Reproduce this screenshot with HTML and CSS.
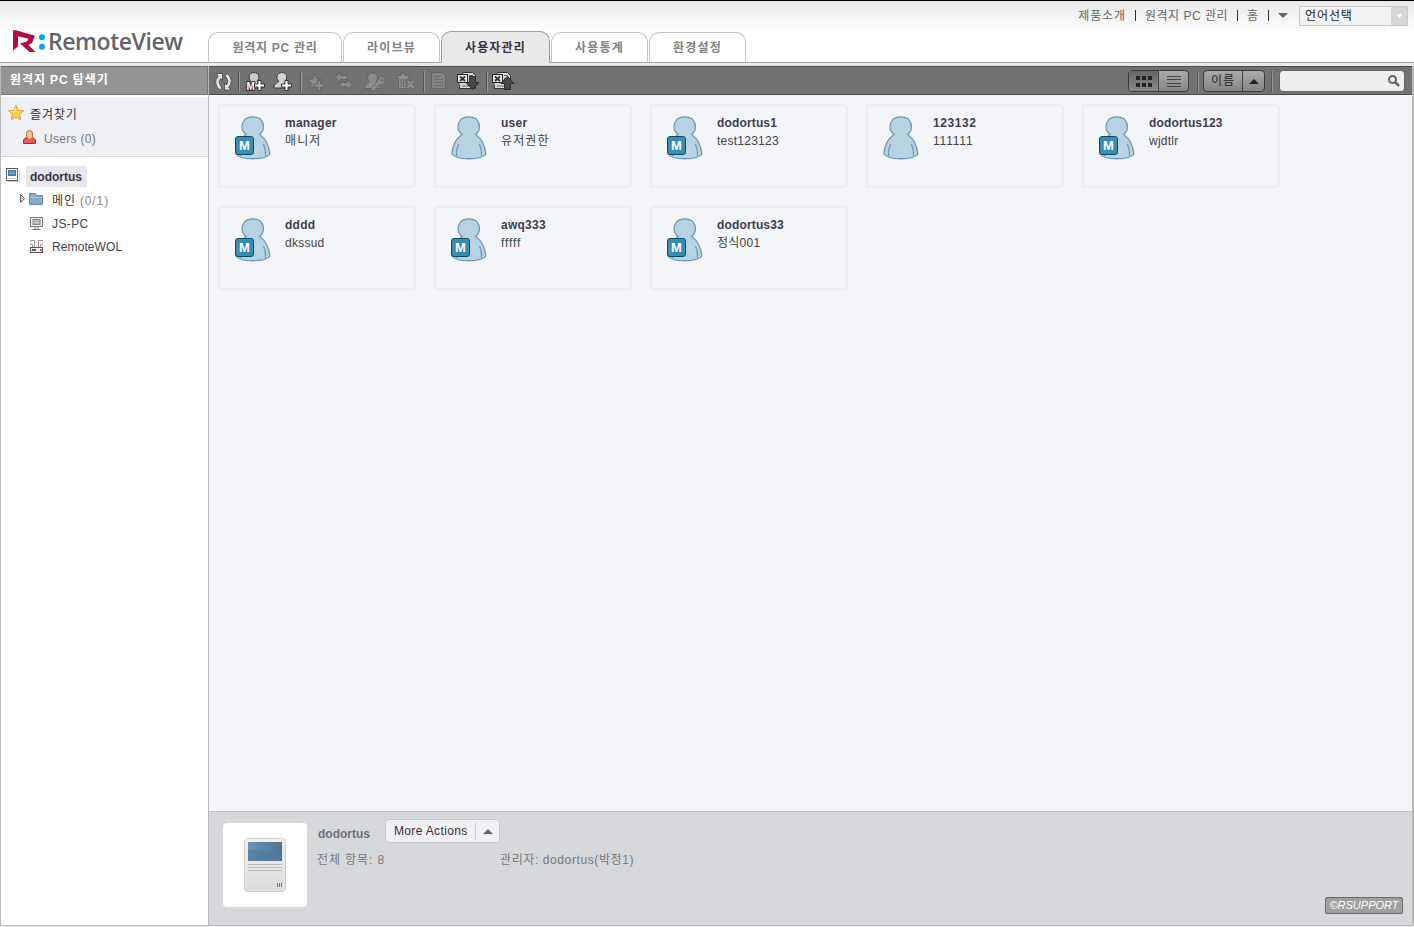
FILE: index.html
```html
<!DOCTYPE html>
<html lang="ko">
<head>
<meta charset="utf-8">
<title>RemoteView</title>
<link rel="stylesheet" href="styles.css">
</head>
<body>
<svg class="defs" width="0" height="0">
  <defs>
    <symbol id="person" viewBox="0 0 36 44">
      <path d="M11 18.500C4.500 13.500 6 .8 17.800 .8S31 13.500 24.600 18.500C29.500 22 34 29 34.900 38C31 44.300 5 44.300 .9 38C1.500 29 6 22 11 18.500Z" fill="#b7d3e1" stroke="#7196b7" stroke-width="1.300"/>
      <path d="M7.500 28Q5.200 33 5.500 40M28.500 28Q30.800 33 30.500 40" fill="none" stroke="#7196b7" stroke-width="1.300"/>
    </symbol>
    <g id="figure"><path d="M-3 2.500C-6.500-1-5-6.500 0-6.500S6.500-1 3 2.500C6.500 4 7.500 6 8 9H-8C-7.500 6-6.500 4-3 2.500Z"/></g>
    <g id="plus"><path d="M-1.500-5H1.500V-1.500H5V1.500H1.500V5H-1.500V1.500H-5V-1.500H-1.500Z"/></g>
    <g id="sheet">
      <path d="M463 73.500V72.500H472.500L475.500 75.500V88.500H459.500V85" fill="#d8d8d8" stroke="#333"/>
      <rect x="457.500" y="74.500" width="10" height="8" fill="#e6e6e6" stroke="#222"/>
      <path d="M460 76.500L465 81M465 76.500L460 81" stroke="#333" stroke-width="1.800"/>
      <path d="M469 75.500H473M469 78.500H474M462 86H470" stroke="#666"/>
    </g>
  </defs>
</svg>
<div class="app">
  <header class="header">
    <svg class="logo" width="208" height="61" viewBox="0 1 208 61">
      <path d="M13 30.500L15 30L35 35.800L32 43L28.500 45L35.500 52H29.500L20 43.500L27 41.500L28.500 38.800L18 36.300V46.500L13 50.500Z" fill="#b20d3b"/>
      <circle cx="42" cy="37.300" r="3" fill="#0aa2e6"/><circle cx="42" cy="46.800" r="3" fill="#0aa2e6"/>
      <text class="logo-text" x="48" y="50" textLength="135">RemoteView</text>
    </svg>
    <nav class="tabs">
      <a class="tab tab-wide">원격지 PC 관리</a>
      <a class="tab">라이브뷰</a>
      <a class="tab tab-active">사용자관리</a>
      <a class="tab">사용통계</a>
      <a class="tab">환경설정</a>
    </nav>
    <div class="links">
      <a>제품소개</a><i class="bar"></i><a class="mixed">원격지 PC 관리</a><i class="bar"></i><a>홈</a><i class="bar"></i>
      <svg class="caret" width="10" height="5"><path d="M0 0H10L5 5Z" fill="#666"/></svg>
      <div class="language"><span>언어선택</span><b><svg width="5" height="4"><path d="M0 0H5V1L2.500 4L0 1Z" fill="#fff"/></svg></b></div>
    </div>
  </header>

  <main class="main">
    <aside class="sidebar">
      <h2 class="side-title">원격지 PC 탐색기</h2>
      <div class="favorites">
        <div class="fav-row">
          <svg width="29" height="24" viewBox="1 102 29 24"><path d="M16 105.500L18.200 110.500L23.500 110.800L19.500 114.300L20.700 119.500L16 116.800L11.300 119.500L12.500 114.300L8.500 110.800L13.800 110.500Z" fill="#ffd253" stroke="#d9981f"/><path d="M15.500 107.500L14.500 111.500L10.500 112" stroke="#fff1b0" fill="none"/></svg>
          <span class="kor dark">즐겨찾기</span>
        </div>
        <div class="fav-row">
          <svg width="43" height="24" viewBox="1 127 43 24"><path d="M23.500 143.500V140Q24 138 28 137.500H31Q35 138 35.500 140V143.500Z" fill="#ef5661" stroke="#b52a34"/><path d="M26.500 137V134Q26.500 130.500 29.500 130.500T32.500 134V137L29.500 140Z" fill="#f4c78c" stroke="#b6722e"/></svg>
          <span class="users">Users (0)</span>
        </div>
      </div>
      <div class="tree">
        <div class="tree-row root">
          <svg width="25" height="24" viewBox="1 164 25 24"><path d="M8 181.500H19.500V170" stroke="#ccc" fill="none"/><rect x="6.500" y="168.500" width="11" height="12" fill="#fff" stroke="#555e68"/><rect x="8.500" y="170.500" width="7" height="5" fill="#6699bf" stroke="#3e78a8"/><path d="M8 178.500H16" stroke="#ccc"/></svg>
          <span class="root-name">dodortus</span>
        </div>
        <div class="tree-row">
          <svg width="51" height="24" viewBox="1 188 51 24"><path d="M20.500 194.500L24.500 198.500L20.500 202.500Z" fill="#ddd" stroke="#666"/><path d="M29.500 204.500V193.500H35.500L36.500 195.500H42.500V204.500Z" fill="#8aabc8" stroke="#6488a8"/><path d="M30 197.500H42" stroke="#a8c2d6"/></svg>
          <span class="kor dark drop">메인</span><span class="count drop">(0/1)</span>
        </div>
        <div class="tree-row">
          <svg width="51" height="23" viewBox="1 212 51 23"><rect x="30.500" y="217.500" width="12" height="9" fill="#eee" stroke="#777"/><rect x="33" y="219.500" width="7" height="5" fill="#bbb" stroke="#888"/><path d="M35 227V229M38 227V229M32.500 229.500H40.500" stroke="#777" fill="none"/></svg>
          <span class="js drop">JS-PC</span>
        </div>
        <div class="tree-row">
          <svg width="51" height="23" viewBox="1 235 51 23"><path d="M30 240.500H34.500V247M43 240.500H38.500V247M30 244.500H32.500V247M43 244.500H40.500V247" stroke="#999" fill="none"/><rect x="30.500" y="247.500" width="12" height="5" fill="#eee" stroke="#555"/><path d="M32 250H36" stroke="#555" stroke-width="2"/><path d="M40 250H41.500" stroke="#e33" stroke-width="2"/></svg>
          <span class="wol drop">RemoteWOL</span>
        </div>
      </div>
    </aside>

    <section class="content">
      <div class="toolbar">
        <svg width="28" height="27" viewBox="209 67 28 27"><g fill="#e2e2e2" stroke="#444" stroke-width=".8"><path d="M216 73.500H222.500V80.500L220.600 78.500Q217.500 82.500 222 88L219.500 90Q212.500 83 218.300 76Z"/><path d="M231 90H224.500V83L226.400 85Q229.500 81 225 75.500L227.500 73.500Q234.500 80.500 228.700 87.500Z"/></g></svg>
        <i class="sep"></i>
        <svg width="28" height="27" viewBox="240 67 28 27"><use href="#figure" x="254" y="79" fill="#c9c9c9" stroke="#3b3b3b"/><text class="m-small" x="246.500" y="89.500">M</text><use href="#plus" x="259.500" y="85.500" fill="#fff" stroke="#333"/></svg>
        <svg width="31" height="27" viewBox="268 67 31 27"><use href="#figure" x="281.800" y="79" fill="#d2d2d2" stroke="#3b3b3b"/><use href="#plus" x="286.500" y="85.500" fill="#fff" stroke="#333"/></svg>
        <i class="sep"></i>
        <svg width="28" height="27" viewBox="302 67 28 27" fill="#8c8c8c" stroke="#666"><path d="M315 73.500L317 79L323 79.500L318.500 83L320 89L315 85.500L310 89L311.500 83L307 79.500L313 79Z"/><use href="#plus" x="319" y="85.500"/></svg>
        <svg width="28" height="27" viewBox="330 67 28 27" fill="#8c8c8c" stroke="#666"><path d="M335 77.500L340.500 72.500V75.500H347V79.500H340.500V82.500Z"/><path d="M352.500 84.500L347 79.500V82.500H340V86.500H347V89.500Z"/></svg>
        <svg width="32" height="27" viewBox="358 67 32 27" fill="#8c8c8c" stroke="#666"><use href="#figure" x="372.500" y="79.500"/><path d="M379 78L382 76L386 80L383 85L379 85L374 91H371V88L377 82Z"/><circle cx="382" cy="80" r="1"/></svg>
        <svg width="32" height="27" viewBox="390 67 32 27" fill="#8c8c8c" stroke="#666"><path d="M397 75.500H401V73.500H405V75.500H409V78H408V88.500H398.500V78H397Z"/><path d="M401 79V87M403.500 79V87M406 79V87"/><path d="M406 81L408 79.500L410.500 82L413 79.500L415 81.500L412.500 84.500L415 87L413 89.500L410.500 87L408 89.500L406 87.500L408.500 84.500Z"/></svg>
        <i class="sep"></i>
        <svg width="27" height="27" viewBox="425 67 27 27" fill="#858585" stroke="#666"><path d="M431.500 72.500H442L445.500 76V88.500H431.500Z"/><path d="M434 76.500H441M434 79.500H443M434 82.500H443M434 85.500H443" stroke="#6c6c6c"/></svg>
        <svg width="33" height="27" viewBox="452 67 33 27"><use href="#sheet"/><path d="M469.500 76.500H475.500V82.500H478.800L472.500 89.800L466 82.500H469.500Z" fill="#484848" stroke="#2c2c2c"/></svg>
        <i class="sep"></i>
        <svg width="32" height="27" viewBox="488 67 32 27"><use href="#sheet" x="35"/><path d="M504.500 89.500H510.500V83.500H513.800L507.500 76.200L501 83.500H504.500Z" fill="#484848" stroke="#2c2c2c"/></svg>
        <div class="tools-right">
          <div class="seg view"><span class="pressed"><svg width="16" height="11" fill="#222"><path d="M0 0H4V4H0ZM6 0H10V4H6ZM12 0H16V4H12ZM0 7H4V11H0ZM6 7H10V11H6ZM12 7H16V11H12Z"/></svg></span><span><svg width="14" height="11" stroke="#444"><path d="M0 .5H14M0 3.500H14M0 7.500H14M0 10.500H14"/></svg></span></div>
          <i class="sep"></i>
          <div class="seg sort"><span class="sort-name">이름</span><span><svg width="10" height="5"><path d="M0 5L5 0L10 5Z" fill="#222"/></svg></span></div>
          <i class="sep"></i>
          <div class="search"><svg width="12" height="12" fill="none" stroke="#666" stroke-width="2"><circle cx="4.500" cy="4.500" r="3.500"/><path d="M7 7L11 11" stroke-width="2.500"/></svg></div>
        </div>
      </div>

      <div class="cards">
        <article class="card"><div class="avatar"><svg width="36" height="44"><use href="#person"/></svg><b class="badge">M</b></div><div><h3>manager</h3><p class="kor">매니저</p></div></article>
        <article class="card"><div class="avatar"><svg width="36" height="44"><use href="#person"/></svg></div><div><h3>user</h3><p class="kor">유저권한</p></div></article>
        <article class="card"><div class="avatar"><svg width="36" height="44"><use href="#person"/></svg><b class="badge">M</b></div><div><h3 class="tight">dodortus1</h3><p>test123123</p></div></article>
        <article class="card"><div class="avatar"><svg width="36" height="44"><use href="#person"/></svg></div><div><h3 class="digits">123132</h3><p class="ones">111111</p></div></article>
        <article class="card"><div class="avatar"><svg width="36" height="44"><use href="#person"/></svg><b class="badge">M</b></div><div><h3 class="tight">dodortus123</h3><p>wjdtlr</p></div></article>
        <article class="card"><div class="avatar"><svg width="36" height="44"><use href="#person"/></svg><b class="badge">M</b></div><div><h3>dddd</h3><p>dkssud</p></div></article>
        <article class="card"><div class="avatar"><svg width="36" height="44"><use href="#person"/></svg><b class="badge">M</b></div><div><h3>awq333</h3><p class="narrow">fffff</p></div></article>
        <article class="card"><div class="avatar"><svg width="36" height="44"><use href="#person"/></svg><b class="badge">M</b></div><div><h3 class="tight">dodortus33</h3><p>정식001</p></div></article>
      </div>

      <footer class="details">
        <div class="thumb">
          <svg width="42" height="54">
            <defs><linearGradient id="screen"><stop stop-color="#6d94b2"/><stop offset="1" stop-color="#4d7393"/></linearGradient><linearGradient id="case" x2="0" y2="1"><stop stop-color="#f0f0f0"/><stop offset="1" stop-color="#dcdddf"/></linearGradient></defs>
            <rect x=".5" y=".5" width="41" height="53" rx="3" fill="url(#case)" stroke="#d2d2d2"/>
            <rect x="4" y="4" width="34" height="19" fill="url(#screen)"/><path d="M4 12Q24 12 38 16V23H4Z" fill="#4e7899" opacity=".6"/>
            <path d="M4 26.500H38M4 29.500H38M4 32.500H38" stroke="#bbb"/><path d="M33.500 45V49M35.500 45V49M37.500 45V49" stroke="#777"/>
          </svg>
        </div>
        <div class="info">
          <div class="info-head"><strong>dodortus</strong><div class="more"><span>More Actions</span><b><svg width="10" height="5"><path d="M0 5L5 0L10 5Z" fill="#666"/></svg></b></div></div>
          <div class="info-line"><span class="total">전체 항목: 8</span><span class="admin">관리자: dodortus(박정1)</span></div>
        </div>
        <div class="support">©RSUPPORT</div>
      </footer>
    </section>
  </main>
</div>
</body>
</html>
```
FILE: styles.css
```css
* { box-sizing: border-box; }
body { margin: 0; background: #eee; font: 12px/18px "Liberation Sans", "Noto Sans CJK KR", sans-serif; color: #444; overflow: hidden; }
svg { display: block; flex: none; }
h2, h3, p { margin: 0; font-size: 12px; }
.defs { position: absolute; }
.app { width: 1414px; height: 927px; display: flex; flex-direction: column; }

.header { height: 66px; display: flex; align-items: flex-start; border-top: 1px solid #000; background: linear-gradient(#e8e8e8, #fff 31px, #fff 61px, #a6a6a3 61px, #a6a6a3 62px, #e9e9e9 62px); }
.logo-text { font: 600 23px "Open Sans", sans-serif; fill: #646567; }
.tabs { display: flex; align-items: flex-end; gap: 1px; height: 62px; }
.tab { width: 97px; height: 31px; padding-top: 6px; text-align: center; border: 1px solid #c5c5c5; border-bottom-color: #a6a6a3; border-radius: 10px 10px 0 0; background: #fff; color: #828282; font-weight: bold; letter-spacing: 1.2px; }
.tab-wide { width: 134px; letter-spacing: .7px; }
.tab-active { width: 109px; height: 32px; padding-top: 7px; background: #e9e9e9; border-color: #a0a0a0; border-bottom-color: #e9e9e9; color: #3a3040; }
.links { margin-left: auto; padding: 4px 6px 0 0; height: 25px; display: flex; align-items: center; color: #666; letter-spacing: .9px; }
.mixed { letter-spacing: .5px; }
.bar { width: 1px; height: 11px; margin: 0 9px; background: #333; }
.caret { margin-right: 11px; }
.language { width: 109px; height: 20px; display: flex; justify-content: space-between; border: 1px solid #c8c8c8; background: #f3f3f3; color: #222; padding-left: 5px; }
.language b { width: 16px; display: grid; place-items: center; background: #d6d6d6; }

.main { height: 861px; display: flex; padding-bottom: 1px; border-bottom: 1px solid #eee; background: #bbb; }
.sidebar { width: 209px; border: solid #b9b9b9; border-width: 0 1px; background: #fff; }
.side-title { height: 29px; padding-left: 9px; border: 1px solid #777; border-left: 0; border-top-color: #6d6d6d; background: #959595; color: #fff; line-height: 27px; letter-spacing: .9px; }
.favorites { height: 62px; margin-bottom: 7px; padding-top: 5px; border-top: 2px solid #fff; border-bottom: 1px solid #d2d2d6; background: #eff0f5; }
.fav-row { display: flex; height: 24px; line-height: 26px; }
.fav-row:last-child { margin-top: 1px; line-height: 24px; color: #777; }
.users { letter-spacing: .3px; }
.kor { letter-spacing: .9px; }
.dark { color: #333; }
.tree-row { height: 23px; display: flex; line-height: 23px; }
.tree-row:nth-child(-n+2) { height: 24px; line-height: 24px; }
.drop { padding-top: 1px; }
.root-name { width: 61px; height: 21px; margin-top: 2px; padding-left: 4px; background: #e8e7ee; color: #393140; font-weight: bold; line-height: 22px; }
.count { margin-left: 4px; color: #888; letter-spacing: .9px; }
.js { letter-spacing: .4px; }
.wol { letter-spacing: .1px; }

.content { width: 1204px; border-right: 1px solid #bbb; background: #f3f5f9; display: flex; flex-direction: column; }
.toolbar { height: 29px; display: flex; flex: none; border: solid #4c4a4a; border-width: 1px 0; background: #727272; }
.sep { flex: none; width: 3px; height: 21px; margin-top: 4px; background: linear-gradient(90deg, #727272 1px, #555 1px, #555 2px, #959595 2px); }
.tools-right { margin-left: auto; padding: 3px 7px 0 0; display: flex; }
.tools-right .sep { margin-top: 1px; }
.seg { height: 22px; display: flex; border: 1px solid #393939; border-radius: 4px; overflow: hidden; background: linear-gradient(#aaa, #858585); }
.seg span { flex: 1; display: grid; place-items: center; }
.seg span + span { border-left: 1px solid #444; }
.seg .pressed { background: linear-gradient(#666, #888); }
.view { width: 61px; margin-right: 7px; }
.sort { width: 62px; margin: 0 5px 0 4px; }
.sort .sort-name { flex: 0 0 38px; letter-spacing: 1px; color: #222; line-height: 20px; }
.search { width: 126px; height: 22px; margin-left: 6px; padding: 4px 4px 0 0; display: flex; justify-content: flex-end; border: 1px solid #666; border-radius: 4px; background: #efefef; }
.m-small { font: bold 10px "Liberation Sans", sans-serif; fill: #fff; stroke: #333; stroke-width: 2px; paint-order: stroke; }

.cards { height: 716px; padding: 9px; display: grid; grid-template-columns: repeat(5, 198px); grid-auto-rows: 84px; gap: 18px; align-content: start; }
.card { display: flex; gap: 14px; padding: 8px 14px 0 15px; border: 2px solid #eeeeed; border-radius: 4px; letter-spacing: .25px; }
.card h3 { color: #403c4d; }
.card h3.digits { letter-spacing: .6px; }
.card h3.tight { letter-spacing: .15px; }
.card p.kor { letter-spacing: 1.1px; }
.card p.narrow { letter-spacing: .9px; }
.card p.ones { letter-spacing: .8px; }
.avatar { position: relative; width: 36px; padding-top: 2px; }
.badge { position: absolute; left: 0; top: 22px; width: 19px; height: 19px; border: 1px solid #084d6b; border-radius: 3px; background: #398db3; color: #fff; text-align: center; font-size: 13px; line-height: 18px; letter-spacing: 0; }

.details { flex: 1; display: flex; border-top: 1px solid #bfc0c4; background: #d7d8dc; padding: 7px 9px 0 14px; color: #777; }
.thumb { width: 84px; height: 84px; margin-top: 4px; display: grid; place-items: center; border-radius: 4px; background: #fff; }
.info { margin-left: 10px; }
.info-head { display: flex; height: 32px; }
.info-head strong { width: 68px; padding: 6px 0 0 1px; color: #70707a; }
.more { width: 115px; height: 24px; display: flex; align-items: center; border: 1px solid #c8c8cc; border-radius: 4px; background: #f1f1f5; color: #333; }
.more span { width: 90px; padding-left: 8px; border-right: 1px solid #ccc; letter-spacing: .35px; }
.more b { flex: 1; display: grid; place-items: center; }
.info-line { display: flex; }
.total { width: 183px; letter-spacing: .9px; }
.admin { letter-spacing: .6px; }
.support { width: 78px; height: 17px; margin: 78px 0 0 auto; border: 1px solid #696969; border-radius: 2px; background: #a0a0a0; color: #fff; text-align: center; font-style: italic; font-size: 11px; line-height: 15px; }
```
